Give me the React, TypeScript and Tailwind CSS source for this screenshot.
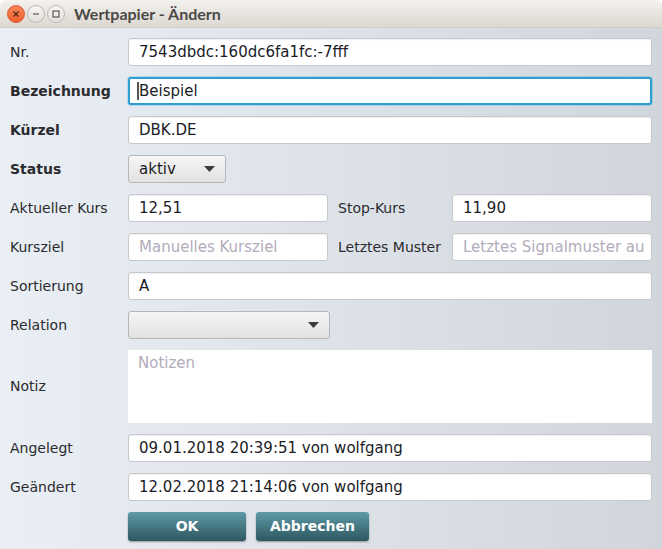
import React from "react";

const font = { fontFamily: '"DejaVu Sans", "Liberation Sans", sans-serif' };

function Field({ value, placeholder, focus }: { value?: string; placeholder?: string; focus?: boolean }) {
  return (
    <div
      className={
        "flex h-[28px] w-full items-center rounded-[3px] bg-white text-[15px] overflow-hidden whitespace-nowrap " +
        (focus
          ? "border-2 border-[#2d9fd3] pl-[7px] shadow-[0_0_0_1px_rgba(45,159,211,0.25)]"
          : "border border-[#c6c8cc] pl-[10px] shadow-[inset_0_1px_1px_rgba(0,0,0,0.06)]")
      }
    >
      {focus && <span className="inline-block h-[18px] w-[2px] bg-[#555]" />}
      {value ? (
        <span className="text-[#1b1b26]">{value}</span>
      ) : (
        <span className="text-[#b3acbb]">{placeholder}</span>
      )}
    </div>
  );
}

function Combo({ value, w }: { value?: string; w: string }) {
  return (
    <div
      className={
        "flex h-[28px] items-center justify-between rounded-[3px] border border-[#b5b7ba] bg-gradient-to-b from-[#f6f6f6] to-[#e2e2e2] pl-[10px] pr-[10px] text-[15px] text-[#1b1b26] " +
        w
      }
    >
      <span>{value ?? ""}</span>
      <svg width="11" height="6" viewBox="0 0 11 6">
        <path d="M0 0 L11 0 L5.5 6 Z" fill="#3c3c3c" />
      </svg>
    </div>
  );
}

function Row({ label, bold, children, h = "h-[28px]" }: { label: string; bold?: boolean; children: React.ReactNode; h?: string }) {
  return (
    <div className={"flex items-center " + h}>
      <div className={"w-[118px] shrink-0 text-[14px] text-[#2b2b2f] " + (bold ? "font-bold" : "")}>{label}</div>
      <div className="flex flex-1 items-center">{children}</div>
    </div>
  );
}

function Circle({ children, orange }: { children: React.ReactNode; orange?: boolean }) {
  return (
    <div
      className={
        "flex h-[18px] w-[18px] items-center justify-center rounded-full border " +
        (orange
          ? "border-[#d9582c] bg-gradient-to-b from-[#f9875a] to-[#ee5c2b]"
          : "border-[#bdb9b3] bg-gradient-to-b from-[#f7f6f4] to-[#e2dfda]")
      }
    >
      {children}
    </div>
  );
}

export default function App() {
  return (
    <div className="h-[549px] w-[662px] overflow-hidden bg-white" style={font}>
      <div className="flex h-[28px] items-center rounded-t-[6px] border-b border-[#cfcbc5] bg-gradient-to-b from-[#f3f1ee] to-[#dcd8d2] pl-[7px]">
        <div className="flex items-center gap-[2px]">
          <Circle orange>
            <svg width="8" height="8" viewBox="0 0 8 8">
              <path d="M1.5 1.5 L6.5 6.5 M6.5 1.5 L1.5 6.5" stroke="#5a2a18" strokeWidth="1.4" />
            </svg>
          </Circle>
          <Circle>
            <svg width="8" height="8" viewBox="0 0 8 8">
              <path d="M1 4 L7 4" stroke="#5d5b57" strokeWidth="1.2" />
            </svg>
          </Circle>
          <Circle>
            <svg width="8" height="8" viewBox="0 0 8 8">
              <rect x="1" y="1" width="6" height="6" fill="none" stroke="#5d5b57" strokeWidth="1.2" />
            </svg>
          </Circle>
        </div>
        <div className="ml-[9px] text-[16px] font-bold text-[#4c4a47]" style={{ fontFamily: 'Lato, "DejaVu Sans", sans-serif' }}>
          Wertpapier - Ändern
        </div>
      </div>
      <div className="flex h-[521px] flex-col gap-[11px] bg-gradient-to-r from-[#e9eff5] to-[#d1d6dd] pl-[10px] pr-[10px] pt-[10px]">
        <Row label="Nr.">
          <Field value="7543dbdc:160dc6fa1fc:-7fff" />
        </Row>
        <Row label="Bezeichnung" bold>
          <Field value="Beispiel" focus />
        </Row>
        <Row label="Kürzel" bold>
          <Field value="DBK.DE" />
        </Row>
        <Row label="Status" bold>
          <Combo value="aktiv" w="w-[98px]" />
        </Row>
        <Row label="Aktueller Kurs">
          <div className="w-[200px]">
            <Field value="12,51" />
          </div>
          <div className="w-[124px] pl-[10px] text-[14px] text-[#2b2b2f]">Stop-Kurs</div>
          <div className="w-[200px]">
            <Field value="11,90" />
          </div>
        </Row>
        <Row label="Kursziel">
          <div className="w-[200px]">
            <Field placeholder="Manuelles Kursziel" />
          </div>
          <div className="w-[124px] pl-[10px] text-[14px] text-[#2b2b2f]">Letztes Muster</div>
          <div className="w-[200px]">
            <Field placeholder="Letztes Signalmuster au" />
          </div>
        </Row>
        <Row label="Sortierung">
          <Field value="A" />
        </Row>
        <Row label="Relation">
          <Combo w="w-[202px]" />
        </Row>
        <Row label="Notiz" h="h-[73px]">
          <div className="h-[73px] w-full bg-white pl-[10px] pt-[2px] text-[15px] text-[#b3acbb]">Notizen</div>
        </Row>
        <Row label="Angelegt">
          <Field value="09.01.2018 20:39:51 von wolfgang" />
        </Row>
        <Row label="Geändert">
          <Field value="12.02.2018 21:14:06 von wolfgang" />
        </Row>
        <div className="flex gap-[10px] pl-[118px]">
          <button className="h-[29px] w-[118px] rounded-[3px] bg-gradient-to-b from-[#5f9ba6] to-[#2e5861] text-[14px] font-bold text-white shadow-[0_1px_2px_rgba(0,0,0,0.35)]">
            OK
          </button>
          <button className="h-[29px] w-[113px] rounded-[3px] bg-gradient-to-b from-[#5f9ba6] to-[#2e5861] text-[14px] font-bold text-white shadow-[0_1px_2px_rgba(0,0,0,0.35)]">
            Abbrechen
          </button>
        </div>
      </div>
    </div>
  );
}
